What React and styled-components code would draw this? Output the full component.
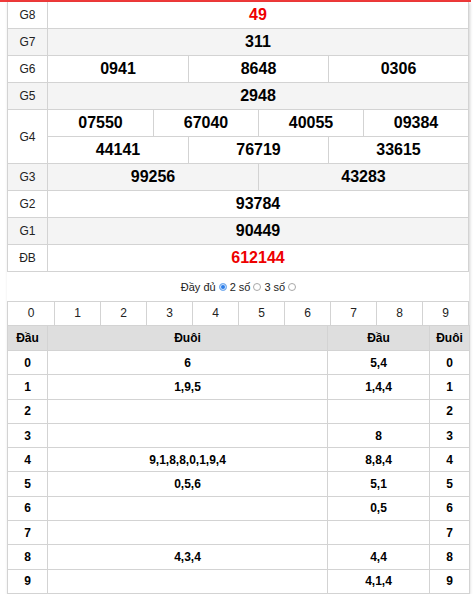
import React from 'react'
import styled, { createGlobalStyle } from 'styled-components'

const GlobalStyle = createGlobalStyle`
  body {
    margin: 0;
    background: #fff;
    font-family: "Liberation Sans", Arial, sans-serif;
    color: #000;
  }
`

const prizes = [
  { label: 'G8', rows: [['49']], red: true },
  { label: 'G7', rows: [['311']] },
  { label: 'G6', rows: [['0941', '8648', '0306']] },
  { label: 'G5', rows: [['2948']] },
  { label: 'G4', rows: [['07550', '67040', '40055', '09384'], ['44141', '76719', '33615']] },
  { label: 'G3', rows: [['99256', '43283']] },
  { label: 'G2', rows: [['93784']] },
  { label: 'G1', rows: [['90449']] },
  { label: 'ĐB', rows: [['612144']], red: true },
]

const loto = [
  ['0', '6', '5,4', '0'],
  ['1', '1,9,5', '1,4,4', '1'],
  ['2', '', '', '2'],
  ['3', '', '8', '3'],
  ['4', '9,1,8,8,0,1,9,4', '8,8,4', '4'],
  ['5', '0,5,6', '5,1', '5'],
  ['6', '', '0,5', '6'],
  ['7', '', '', '7'],
  ['8', '4,3,4', '4,4', '8'],
  ['9', '', '4,1,4', '9'],
]

const App = () => (
  <>
    <GlobalStyle />
    <TopBar />
    <Wrapper>
      <Board>
        {prizes.map((p, i) => (
          <PrizeRow key={p.label} $shade={i % 2 === 1}>
            <Label>{p.label}</Label>
            <Values>
              {p.rows.map((r, j) => (
                <SubRow key={j} $cols={r.length} $last={j === p.rows.length - 1}>
                  {r.map(n => (
                    <Number key={n} $red={p.red}>{n}</Number>
                  ))}
                </SubRow>
              ))}
            </Values>
          </PrizeRow>
        ))}
      </Board>

      <Options>
        <span>Đầy đủ</span>
        <Radio type='radio' name='mode' defaultChecked />
        <span>2 số</span>
        <Radio type='radio' name='mode' />
        <span>3 số</span>
        <Radio type='radio' name='mode' />
      </Options>

      <Digits>
        {Array.from({ length: 10 }, (_, i) => (
          <Digit key={i}>{i}</Digit>
        ))}
      </Digits>

      <LotoTable>
        <colgroup>
          <col style={{ width: 40 }} />
          <col style={{ width: 280 }} />
          <col style={{ width: 102 }} />
          <col style={{ width: 40 }} />
        </colgroup>
        <thead>
          <tr>
            <Th>Đầu</Th>
            <Th>Đuôi</Th>
            <Th>Đầu</Th>
            <Th>Đuôi</Th>
          </tr>
        </thead>
        <tbody>
          {loto.map(r => (
            <tr key={r[0]}>
              {r.map((c, k) => (
                <Td key={k}>{c}</Td>
              ))}
            </tr>
          ))}
        </tbody>
      </LotoTable>
    </Wrapper>
  </>
)

export default App

const TopBar = styled.div`
  width: 471px;
  height: 2px;
  background: #f03a3a;
`

const Wrapper = styled.div`
  margin-left: 7px;
  width: 462px;
  box-shadow: 1px 1px 3px rgba(0, 0, 0, 0.18);
`

const Board = styled.div`
  display: flex;
  flex-direction: column;
  border-left: 1px solid #d3d3d3;
  border-right: 1px solid #d3d3d3;
`

const PrizeRow = styled.div`
  display: flex;
  border-bottom: 1px solid #d3d3d3;
  background: ${props => (props.$shade ? '#f4f4f4' : '#fff')};
`

const Label = styled.div`
  width: 39px;
  flex: none;
  display: flex;
  align-items: center;
  justify-content: center;
  border-right: 1px solid #d3d3d3;
  font-size: 12px;
  color: #222;
`

const Values = styled.div`
  flex: 1;
  display: flex;
  flex-direction: column;
`

const SubRow = styled.div`
  display: grid;
  grid-template-columns: repeat(${props => props.$cols}, 1fr);
  border-bottom: ${props => (props.$last ? 'none' : '1px solid #d3d3d3')};
`

const Number = styled.div`
  height: 26px;
  line-height: 26px;
  text-align: center;
  font-size: 16px;
  font-weight: bold;
  color: ${props => (props.$red ? '#ee0000' : '#000')};

  & + & {
    border-left: 1px solid #d3d3d3;
  }
`

const Options = styled.div`
  height: 29px;
  display: flex;
  align-items: center;
  justify-content: center;
  gap: 2px;
  font-size: 11px;
  color: #222;
  padding-left: 2px;
`

const Radio = styled.input`
  appearance: none;
  width: 8px;
  height: 8px;
  margin: 0 1px;
  border: 1px solid #a8a8a8;
  border-radius: 50%;
  background: #fff;

  &:checked {
    border-color: #7fb2ef;
    background: #2b7de9;
    box-shadow: inset 0 0 0 1px #d6e7fb;
  }
`

const Digits = styled.div`
  display: grid;
  grid-template-columns: repeat(10, 1fr);
  border: 1px solid #d3d3d3;
  border-bottom: none;
`

const Digit = styled.div`
  height: 23px;
  line-height: 23px;
  text-align: center;
  font-size: 12px;
  color: #222;

  & + & {
    border-left: 1px solid #d3d3d3;
  }
`

const LotoTable = styled.table`
  width: 462px;
  border-collapse: collapse;
  table-layout: fixed;
  font-size: 12px;
`

const Th = styled.th`
  height: 24px;
  padding: 0;
  background: #dedede;
  border: 1px solid #d3d3d3;
  font-weight: bold;
  text-align: center;
`

const Td = styled.td`
  height: 23.3px;
  padding: 0;
  border: 1px solid #d3d3d3;
  font-weight: bold;
  text-align: center;
`
